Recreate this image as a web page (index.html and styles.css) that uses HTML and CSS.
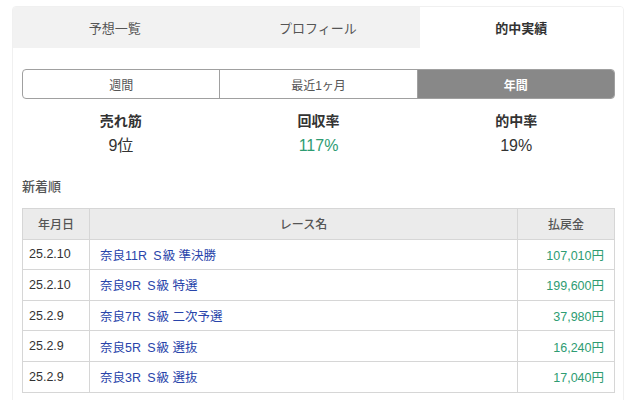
FILE: index.html
```html
<!DOCTYPE html>
<html lang="ja">
<head>
<meta charset="utf-8">
<link rel="stylesheet" href="styles.css">
</head>
<body>
<div class="card">
  <div class="tabs">
    <div class="tab">予想一覧</div>
    <div class="tab">プロフィール</div>
    <div class="tab active">的中実績</div>
  </div>
  <div class="body">
    <div class="seg">
      <div class="seg-item">週間</div>
      <div class="seg-item">最近1ヶ月</div>
      <div class="seg-item on">年間</div>
    </div>
    <div class="stats">
      <div class="stat"><div class="label">売れ筋</div><div class="value">9位</div></div>
      <div class="stat"><div class="label">回収率</div><div class="value green">117%</div></div>
      <div class="stat"><div class="label">的中率</div><div class="value">19%</div></div>
    </div>
    <div class="section">新着順</div>
    <table class="results">
      <thead>
        <tr><th class="c-date">年月日</th><th>レース名</th><th class="c-pay">払戻金</th></tr>
      </thead>
      <tbody>
        <tr><td>25.2.10</td><td class="race">奈良11R&ensp;S&#8202;級 準決勝</td><td class="pay">107,010円</td></tr>
        <tr><td>25.2.10</td><td class="race">奈良9R&ensp;S&#8202;級 特選</td><td class="pay">199,600円</td></tr>
        <tr><td>25.2.9</td><td class="race">奈良7R&ensp;S&#8202;級 二次予選</td><td class="pay">37,980円</td></tr>
        <tr><td>25.2.9</td><td class="race">奈良5R&ensp;S&#8202;級 選抜</td><td class="pay">16,240円</td></tr>
        <tr><td>25.2.9</td><td class="race">奈良3R&ensp;S&#8202;級 選抜</td><td class="pay">17,040円</td></tr>
      </tbody>
    </table>
  </div>
</div>
</body>
</html>
```
FILE: styles.css
```css
html, body {
  margin: 0;
  padding: 0;
  background: #ffffff;
  font-family: "Liberation Sans", "Noto Sans CJK JP", sans-serif;
  color: #333;
}
.card {
  margin: 6px 0 0 12px;
  width: 612px;
  box-sizing: border-box;
  border: 1px solid #f0f0f0;
  border-radius: 4px;
  overflow: hidden;
  height: 420px;
}
.tabs {
  display: flex;
  height: 41px;
}
.tab {
  flex: 1;
  display: flex;
  align-items: center;
  justify-content: center;
  background: #f2f2f2;
  font-size: 13px;
  color: #555;
}
.tab.active {
  background: #fff;
  color: #333;
  font-weight: bold;
}
.body {
  padding: 21px 8px 0 9px;
}
.seg {
  display: flex;
  height: 30px;
  border: 1px solid #a0a0a0;
  border-radius: 4px;
  box-sizing: border-box;
  overflow: hidden;
}
.seg-item {
  flex: 1;
  display: flex;
  align-items: center;
  justify-content: center;
  font-size: 12px;
  color: #555;
  border-left: 1px solid #a0a0a0;
}
.seg-item:first-child { border-left: none; }
.seg-item.on {
  background: #888;
  color: #fff;
  font-weight: bold;
}
.stats {
  display: flex;
  padding-top: 12px;
}
.stat {
  flex: 1;
  display: flex;
  flex-direction: column;
  align-items: center;
}
.label {
  font-size: 14px;
  font-weight: bold;
  line-height: 20px;
  color: #333;
}
.value {
  font-size: 16px;
  line-height: 22px;
  margin-top: 4px;
  color: #333;
}
.value.green {
  color: #2e9c72;
}
.section {
  margin-top: 21px;
  font-size: 13px;
  font-weight: 500;
  color: #555;
  line-height: 18px;
}
.results {
  margin-top: 12px;
  width: 100%;
  border-collapse: collapse;
  font-size: 12.5px;
  border: 1px solid #cfcfcf;
}
.results th, .results td {
  border: 1px solid #d6d6d6;
  height: 29.6px;
  padding: 0 10px 0 6px;
}
.results th {
  background: #ebebeb;
  color: #555;
  font-weight: 500;
  font-size: 12px;
  text-align: center;
  padding: 0;
}
.c-date { width: 66px; }
.c-pay { width: 96px; }
.results td.race {
  color: #2844aa;
  padding-left: 10px;
}
.results td.pay {
  color: #2e9c72;
  text-align: right;
}
```
